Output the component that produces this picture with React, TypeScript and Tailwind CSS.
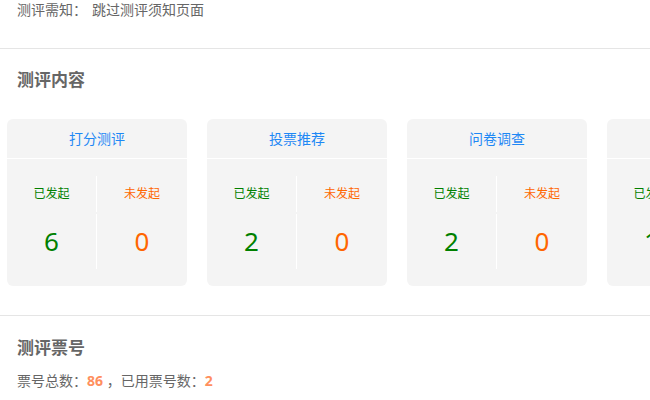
import React from "react";

type Stat = { title: string; started: number; notStarted: number };

const stats: Stat[] = [
  { title: "打分测评", started: 6, notStarted: 0 },
  { title: "投票推荐", started: 2, notStarted: 0 },
  { title: "问卷调查", started: 2, notStarted: 0 },
  { title: "民主测评", started: 1, notStarted: 0 },
];

function StatCard({ stat }: { stat: Stat }) {
  return (
    <div className="w-[180px] shrink-0 rounded-md bg-[#f4f4f4]">
      <div className="flex h-10 items-center justify-center border-b border-white text-[14px] text-[#1e88f5]">
        {stat.title}
      </div>
      <div className="grid grid-cols-2 gap-y-[2px] pt-[17px] pb-[17px]">
        <div className="flex h-[36px] items-center justify-center border-r border-white text-[12px] text-[#008000]">
          已发起
        </div>
        <div className="flex h-[36px] items-center justify-center text-[12px] text-[#ff6600]">
          未发起
        </div>
        <div className="flex h-[55px] items-center justify-center border-r border-white text-[26px] text-[#008000]">
          {stat.started}
        </div>
        <div className="flex h-[55px] items-center justify-center text-[26px] text-[#ff6600]">
          {stat.notStarted}
        </div>
      </div>
    </div>
  );
}

export default function App() {
  return (
    <div
      className="w-[650px] h-[400px] overflow-hidden bg-white text-[#666]"
      style={{ fontFamily: '"Noto Sans", "Noto Sans CJK SC", sans-serif' }}
    >
      {/* Notice */}
      <div className="flex h-5 items-center pl-[17px] text-[14px] leading-5">
        <span>测评需知：</span>
        <span className="ml-[5px]">跳过测评须知页面</span>
      </div>

      <div className="mt-[28px] border-t border-[#e5e5e5]" />

      {/* Content */}
      <h2 className="mt-[20px] pl-[17px] text-[17px] font-bold leading-[22px]">
        测评内容
      </h2>
      <div className="mt-[28px] flex gap-5 pl-[7px]">
        {stats.map((s) => (
          <StatCard key={s.title} stat={s} />
        ))}
      </div>

      <div className="mt-[29px] border-t border-[#e5e5e5]" />

      {/* Tickets */}
      <h2 className="mt-[21px] pl-[17px] text-[17px] font-bold leading-[22px]">
        测评票号
      </h2>
      <div className="mt-[12px] pl-[17px] text-[14px] leading-5">
        票号总数：<b className="text-[#ff8f5e]">86</b> ，已用票号数：
        <b className="text-[#ff8f5e]">2</b>
      </div>
    </div>
  );
}
